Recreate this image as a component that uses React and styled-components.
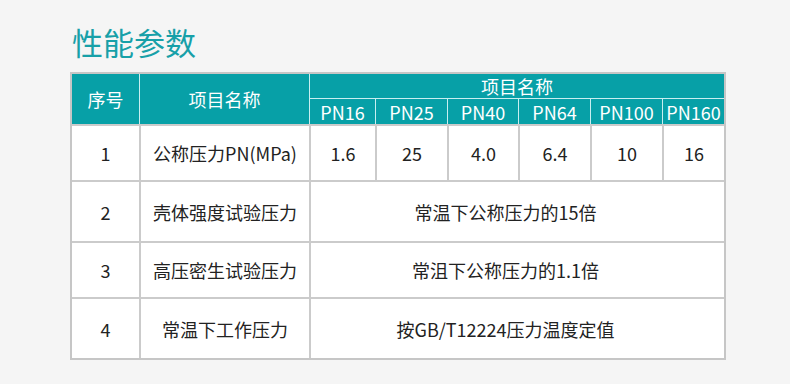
import React from "react"
import styled, { createGlobalStyle } from "styled-components"

const GlobalStyle = createGlobalStyle`
  html, body {
    margin: 0;
    padding: 0;
    background: #f5f5f5;
  }
  body {
    font-family: "Noto Sans CJK SC", "Noto Sans", sans-serif;
  }
`

const Page = styled.div`
  width: 790px;
  height: 384px;
  padding: 24px 0 0 70px;
  box-sizing: border-box;
  background: #f5f5f5;
`

const Title = styled.h2`
  margin: 0 0 0 2px;
  height: 48px;
  font-size: 31px;
  line-height: 36px;
  font-weight: 400;
  color: #17a0a8;
  letter-spacing: 0;
`

const Table = styled.table`
  width: 656px;
  table-layout: fixed;
  border-collapse: separate;
  border-spacing: 0;
  border: 2px solid #c6c6c6;
  background: #fff;
  box-sizing: border-box;
`

const Head = styled.th`
  box-sizing: border-box;
  padding: 0;
  height: ${p => p.$h}px;
  background: #07a0a7;
  color: #fff;
  font-size: 18px;
  font-weight: 400;
  line-height: 22px;
  text-align: center;
  vertical-align: middle;
  border-left: ${p => (p.$first ? "none" : "1px solid #c8eef0")};
  border-bottom: ${p => (p.$split ? "1px solid #c8eef0" : "none")};
`

const Cell = styled.td`
  box-sizing: border-box;
  padding: 0 ${p => p.$pr || 0}px 0 0;
  height: ${p => p.$h}px;
  font-size: 18px;
  line-height: 24px;
  color: #222;
  text-align: center;
  vertical-align: middle;
  border-top: 2px solid #cbcbcb;
  border-left: ${p => (p.$first ? "none" : "2px solid #cbcbcb")};
`

const widths = [67, 170, 66, 72, 71, 72, 72, 62]
const grades = ["PN16", "PN25", "PN40", "PN64", "PN100", "PN160"]
const nominal = ["1.6", "25", "4.0", "6.4", "10", "16"]

const rows = [
  { no: "2", name: "壳体强度试验压力", value: "常温下公称压力的15倍", h: 61 },
  { no: "3", name: "高压密生试验压力", value: "常沮下公称压力的1.1倍", h: 56 },
  { no: "4", name: "常温下工作压力", value: "按GB/T12224压力温度定值", h: 61 },
]

export default function App() {
  return (
    <>
      <GlobalStyle />
      <Page>
        <Title>性能参数</Title>
        <Table>
          <colgroup>
            {widths.map((w, i) => (
              <col key={i} style={{ width: w }} />
            ))}
          </colgroup>
          <thead>
            <tr>
              <Head rowSpan={2} $first $h={50}>序号</Head>
              <Head rowSpan={2} $h={50}>项目名称</Head>
              <Head colSpan={6} $split $h={25}>项目名称</Head>
            </tr>
            <tr>
              {grades.map(g => (
                <Head key={g} $h={25}>
                  {g}
                </Head>
              ))}
            </tr>
          </thead>
          <tbody>
            <tr>
              <Cell $first $h={56}>1</Cell>
              <Cell $h={56}>公称压力PN(MPa)</Cell>
              {nominal.map((n, i) => (
                <Cell key={i} $h={56}>
                  {n}
                </Cell>
              ))}
            </tr>
            {rows.map(r => (
              <tr key={r.no}>
                <Cell $first $h={r.h}>{r.no}</Cell>
                <Cell $h={r.h}>{r.name}</Cell>
                <Cell colSpan={6} $h={r.h} $pr={24}>
                  {r.value}
                </Cell>
              </tr>
            ))}
          </tbody>
        </Table>
      </Page>
    </>
  )
}
